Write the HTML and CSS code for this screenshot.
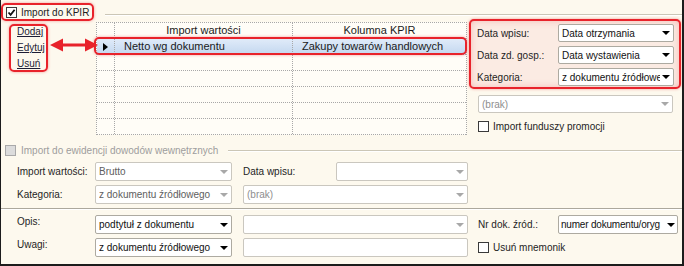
FILE: index.html
```html
<!DOCTYPE html>
<html lang="pl">
<head>
  <meta charset="UTF-8" />
  <title>Import do KPIR</title>
  <link rel="stylesheet" href="styles.css">
</head>
<body>
  <div class="frame">

    <div class="group-head">
      <label class="head-check mark">
        <span class="chk"><svg viewBox="0 0 9 9"><path d="M1.5 4.5 L3.6 6.8 L7.6 1.8" fill="none" stroke="#111" stroke-width="1.8"/></svg></span>
        Import do KPIR
      </label>
      <span class="head-line"></span>
    </div>

    <div class="kpir-body">
      <div class="links-col">
        <div class="links mark">
          <a href="#">Dodaj</a>
          <a href="#">Edytuj</a>
          <a href="#">Usuń</a>
        </div>
      </div>

      <div class="grid">
        <div class="grid-row head"><span></span><span>Import wartości</span><span>Kolumna KPIR</span></div>
        <div class="grid-row sel"><span class="ind"><i class="tri"></i></span><span>Netto wg dokumentu</span><span>Zakupy towarów handlowych</span></div>
        <div class="grid-row"><span></span><span></span><span></span></div>
        <div class="grid-row"><span></span><span></span><span></span></div>
        <div class="grid-row"><span></span><span></span><span></span></div>
        <div class="grid-row"><span></span><span></span><span></span></div>
        <div class="grid-row"><span></span><span></span><span></span></div>
      </div>

      <div class="side">
        <div class="panel mark">
          <span>Data wpisu:</span>
          <div class="combo"><span class="val">Data otrzymania</span><i class="dd"></i></div>
          <span>Data zd. gosp.:</span>
          <div class="combo"><span class="val">Data wystawienia</span><i class="dd"></i></div>
          <span>Kategoria:</span>
          <div class="combo"><span class="val">z dokumentu źródłowego</span><i class="dd"></i></div>
        </div>
        <div class="combo dis brak"><span class="val">(brak)</span><i class="dd"></i></div>
        <label class="check-row promo"><span class="chk"></span>Import funduszy promocji</label>
      </div>
    </div>

    <div class="group-head ewid-head">
      <label class="check-row off"><span class="chk off"></span>Import do ewidencji dowodów wewnętrznych</label>
      <span class="head-line"></span>
    </div>

    <div class="ewid-rows">
      <span>Import wartości:</span>
      <div class="combo dis"><span class="val dark">Brutto</span><i class="dd"></i></div>
      <span class="at4">Data wpisu:</span>
      <div class="combo dis"><span class="val"></span><i class="dd"></i></div>
      <span>Kategoria:</span>
      <div class="combo dis"><span class="val dark">z dokumentu źródłowego</span><i class="dd"></i></div>
      <div class="combo dis span45"><span class="val">(brak)</span><i class="dd"></i></div>
    </div>

    <div class="sep"></div>

    <div class="bottom-rows">
      <span class="top-label">Opis:</span>
      <div class="combo"><span class="val">podtytuł z dokumentu</span><i class="dd"></i></div>
      <div class="combo dis at4"><span class="val"></span><i class="dd"></i></div>
      <span class="at6">Nr dok. źród.:</span>
      <div class="combo tight"><span class="val">numer dokumentu/oryg</span><i class="dd"></i></div>
      <span class="top-label">Uwagi:</span>
      <div class="combo"><span class="val">z dokumentu źródłowego</span><i class="dd"></i></div>
      <div class="textbox at4"></div>
      <label class="check-row span67"><span class="chk"></span>Usuń mnemonik</label>
    </div>

    <svg class="arrow" width="48" height="14" viewBox="0 0 48 14">
      <path d="M0 7 L13 0.5 L13 5.5 L35 5.5 L35 0.5 L48 7 L35 13.5 L35 8.5 L13 8.5 L13 13.5 Z" fill="#e8232b"/>
    </svg>
  </div>
</body>
</html>
```

FILE: styles.css
```css
body {
  margin: 0;
}

.frame {
  position: relative;
  width: 684px;
  height: 266px;
  box-sizing: border-box;
  border: 2px solid #1c1c1c;
  border-top: 0;
  border-left-width: 1px;
  background-color: #fdf9ee;
  font-family: "Liberation Sans", Arial, sans-serif;
  font-size: 10px;
  color: #1e1e1e;
  overflow: hidden;
}

/* red annotation boxes */
.mark {
  border: 2px solid #e8232b;
  border-radius: 5px;
  box-shadow: 0 0 3px rgba(232, 35, 43, 0.45);
}

.group-head {
  display: flex;
  padding-top: 3px;
}

.head-check {
  display: flex;
  align-items: center;
  gap: 4px;
  height: 18px;
  box-sizing: border-box;
  padding: 0 3px;
}

.head-line {
  flex: 1;
  align-self: flex-start;
  height: 0;
  margin: 11px 0 0 11px;
  border-top: 1px solid #cbc6b6;
  border-bottom: 1px solid #fff;
}

.chk {
  flex: none;
  display: flex;
  align-items: center;
  justify-content: center;
  width: 11px;
  height: 11px;
  box-sizing: border-box;
  border: 1px solid #3a3a3a;
  background-color: #fff;
}

.chk svg {
  width: 9px;
  height: 9px;
}

.chk.off {
  border-color: #a9a9a9;
  background-color: #dcdcdc;
}

.check-row {
  display: flex;
  align-items: center;
  gap: 4px;
}

.check-row.off {
  color: #9d9d9d;
  gap: 5px;
}

/* KPIR part */
.kpir-body {
  display: flex;
  align-items: flex-start;
}

.links-col {
  width: 95px;
  padding: 3px 0 0 8px;
  box-sizing: border-box;
}

.links {
  display: flex;
  flex-direction: column;
  gap: 4px;
  width: 39px;
  box-sizing: border-box;
  padding-left: 6px;
  overflow: hidden;
}

.links a {
  line-height: 12px;
  color: #1d1d35;
  text-decoration: underline;
}

.grid {
  width: 371px;
  box-sizing: border-box;
  margin-top: 1px;
  border: 1px dotted #a8a8a8;
  border-bottom: 0;
  background-color: #fffdf7;
  font-size: 11px;
  color: #1a1a1a;
}

.grid-row {
  display: grid;
  grid-template-columns: 18px 178px 1fr;
  height: 16px;
  box-sizing: border-box;
  border-bottom: 1px dotted #a8a8a8;
}

.grid-row > span {
  padding-left: 9px;
  line-height: 15px;
  white-space: nowrap;
  overflow: hidden;
  border-right: 1px dotted #a8a8a8;
}

.grid-row > span:last-child {
  border-right: 0;
}

.grid-row.head > span {
  padding-left: 0;
  text-align: center;
}

.grid-row.sel {
  position: relative;
  background: linear-gradient(#e0ebf9, #c4d8f0);
}

.grid-row.sel::after {
  content: "";
  position: absolute;
  inset: -2px -1px -1px -3px;
  border: 2px solid #e8232b;
  border-radius: 5px;
  box-shadow: 0 0 3px rgba(232, 35, 43, 0.45);
}

.grid-row .ind {
  display: flex;
  align-items: center;
  padding-left: 6px;
}

.tri {
  border-left: 5px solid #000;
  border-top: 4px solid transparent;
  border-bottom: 4px solid transparent;
}

.side {
  width: 212px;
  margin: -2px 0 0 2px;
}

.panel {
  display: grid;
  grid-template-columns: 81px 116px;
  row-gap: 4px;
  align-items: center;
  padding: 3px 5px 1px 6px;
  background-color: #fbebe3;
  box-shadow: inset 0 0 7px rgba(232, 80, 80, 0.3), 0 0 3px rgba(232, 35, 43, 0.45);
}

.combo {
  display: flex;
  align-items: center;
  height: 18px;
  box-sizing: border-box;
  padding: 0 3px;
  border: 1px solid #adaaa1;
  border-radius: 2px;
  background-color: #fff;
  color: #111;
}

.combo .val {
  flex: 1;
  min-width: 0;
  overflow: hidden;
  white-space: nowrap;
}

.combo .dd {
  flex: none;
  margin-left: 2px;
  border-top: 4px solid #000;
  border-left: 4px solid transparent;
  border-right: 4px solid transparent;
}

.combo.tight {
  padding: 0 2px;
}

.combo.tight .val {
  letter-spacing: -0.2px;
}

.combo.dis {
  border-color: #cac7bf;
  color: #8e8e8e;
}

.combo.dis .val.dark {
  color: #5e5e5e;
}

.combo.dis .dd {
  border-top-color: #a8a8a8;
}

.brak {
  width: 195px;
  margin: 6px 0 0 9px;
}

.promo {
  margin: 8px 0 0 9px;
}

/* dowody wewnetrzne */
.ewid-head {
  padding: 0 0 0 4px;
  margin-top: 10px;
}

.ewid-head .head-line {
  align-self: center;
  margin: 1px 0 0 10px;
}

.ewid-rows {
  display: grid;
  grid-template-columns: 78px 137px 11px 93px 132px;
  grid-auto-rows: 19px;
  row-gap: 4px;
  align-items: center;
  margin-top: 6px;
  padding-left: 16px;
}

.ewid-rows .combo,
.bottom-rows .combo {
  height: 19px;
}

.at4 {
  grid-column: 4;
}

.at6 {
  grid-column: 6;
}

.span45 {
  grid-column: 4 / span 2;
}

.span67 {
  grid-column: 6 / span 2;
}

.sep {
  margin-top: 4px;
  border-top: 1px solid #aca89d;
  border-bottom: 1px solid #fff;
}

.bottom-rows {
  display: grid;
  grid-template-columns: 78px 137px 11px 225px 10px 80px 120px;
  grid-auto-rows: 19px;
  row-gap: 4px;
  align-items: center;
  margin-top: 5px;
  padding-left: 16px;
}

.top-label {
  align-self: start;
  line-height: 13px;
}

.textbox {
  height: 19px;
  box-sizing: border-box;
  border: 1px solid #cac7bf;
  border-radius: 2px;
  background-color: #fff;
}

.arrow {
  position: absolute;
  left: 49px;
  top: 38px;
}
```
